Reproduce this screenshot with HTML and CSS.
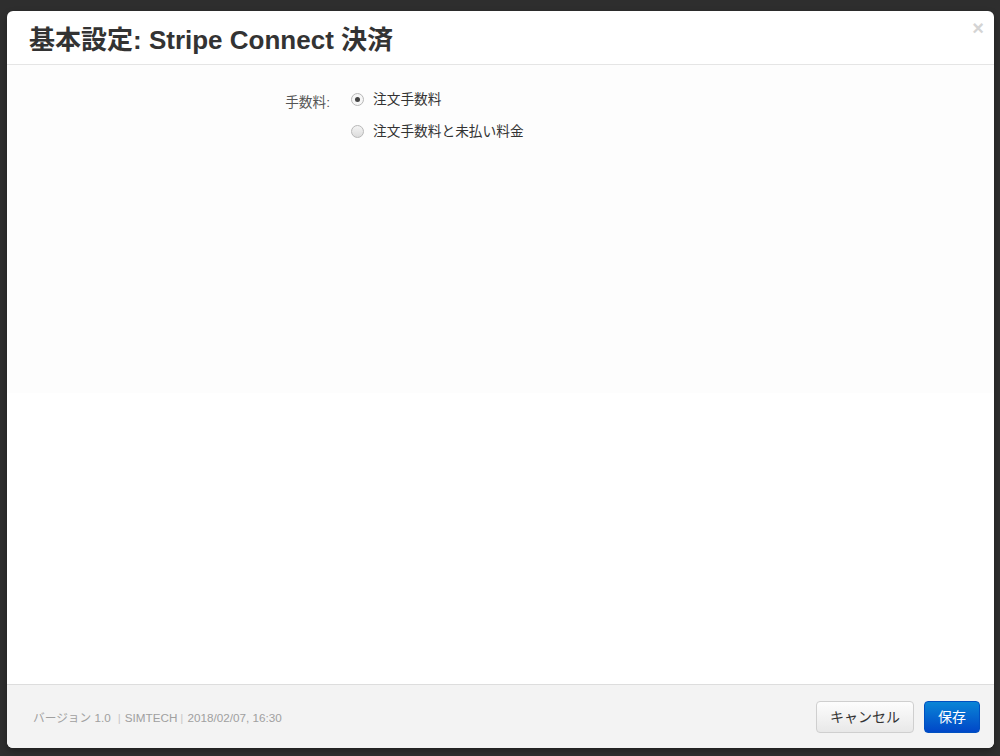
FILE: index.html
```html
<!DOCTYPE html>
<html lang="ja">
<head>
    <meta charset="UTF-8">
    <title>基本設定: Stripe Connect 決済</title>
    <link rel="stylesheet" href="styles.css">
</head>
<body>
<div class="modal">
    <div class="modal-header">
        <h3>基本設定: Stripe Connect 決済</h3>
        <span class="close">&times;</span>
    </div>
    <div class="modal-body">
        <div class="tab-content">
            <div class="control-group">
                <label class="control-label">手数料:</label>
                <div class="controls">
                    <label class="radio"><span class="dot on"></span>注文手数料</label>
                    <label class="radio"><span class="dot"></span>注文手数料と未払い料金</label>
                </div>
            </div>
        </div>
    </div>
    <div class="modal-footer">
        <div class="info">バージョン 1.0<span class="sep">|</span>SIMTECH<span class="sep sep-tight">|</span>2018/02/07, 16:30</div>
        <div class="buttons">
            <a href="javascript:;" class="btn">キャンセル</a>
            <a href="javascript:;" class="btn btn-primary">保存</a>
        </div>
    </div>
</div>
</body>
</html>
```

FILE: styles.css
```css
*{
    margin: 0;
    padding: 0;
    box-sizing: border-box;
}
body{
    background-color: #2e2e2e;
    padding: 11px 6px 8px 7px;
    font-family: "Liberation Sans", "Noto Sans CJK JP", sans-serif;
    font-size: 13px;
    color: #555;
}
.modal{
    width: 987px;
    height: 737px;
    background-color: #fff;
    border-radius: 6px;
    overflow: hidden;
    display: flex;
    flex-direction: column;
    box-shadow: 0 3px 7px rgba(0, 0, 0, 0.3);
}
.modal-header{
    height: 54px;
    border-bottom: 1px solid #e5e5e5;
    display: flex;
    align-items: center;
    justify-content: space-between;
    padding: 0 10px 0 22px;
}
.modal-header h3{
    font-size: 26px;
    font-weight: bold;
    color: #333;
}
.close{
    align-self: flex-start;
    margin-top: 5px;
    font-size: 20px;
    font-weight: bold;
    color: #d4d4d4;
    line-height: 24px;
}
.modal-body{
    flex: 1;
}
.tab-content{
    height: 328px;
    background-color: #fdfdfd;
    padding-top: 25px;
}
.control-group{
    display: flex;
}
.control-label{
    width: 323px;
    text-align: right;
    padding-top: 1px;
    color: #555;
    font-size: 13.7px;
}
.controls{
    margin-left: 21px;
    display: flex;
    flex-direction: column;
    gap: 13px;
}
.radio{
    display: flex;
    align-items: center;
    color: #333;
    line-height: 19px;
    font-size: 13.7px;
}
.dot{
    width: 13px;
    height: 13px;
    border-radius: 50%;
    border: 1px solid #b8b8b8;
    background: linear-gradient(#f4f4f4, #dcdcdc);
    margin-right: 9px;
    position: relative;
}
.dot.on{
    background: #f6f6f6;
}
.dot.on:after{
    content: "";
    position: absolute;
    left: 3px;
    top: 3px;
    width: 5px;
    height: 5px;
    border-radius: 50%;
    background-color: #444;
}
.modal-footer{
    height: 64px;
    background-color: #f3f3f3;
    border-top: 1px solid #ddd;
    display: flex;
    align-items: center;
    justify-content: space-between;
    padding: 0 14px 0 26px;
}
.info{
    font-size: 11.7px;
    color: #a0a0a0;
}
.sep{
    color: #c8c8c8;
    margin: 0 4px 0 7px;
}
.sep-tight{
    margin-left: 3px;
}
.buttons{
    display: flex;
    gap: 10px;
}
.btn{
    display: block;
    text-decoration: none;
    height: 32px;
    line-height: 30px;
    padding: 0 13px;
    font-size: 14px;
    color: #333;
    border: 1px solid #cfcfcf;
    border-radius: 4px;
    background: linear-gradient(#fdfdfd, #e8e8e8);
}
.btn-primary{
    color: #fff;
    border-color: #0050c0;
    background: linear-gradient(#0a85d6, #0047c8);
}
```
